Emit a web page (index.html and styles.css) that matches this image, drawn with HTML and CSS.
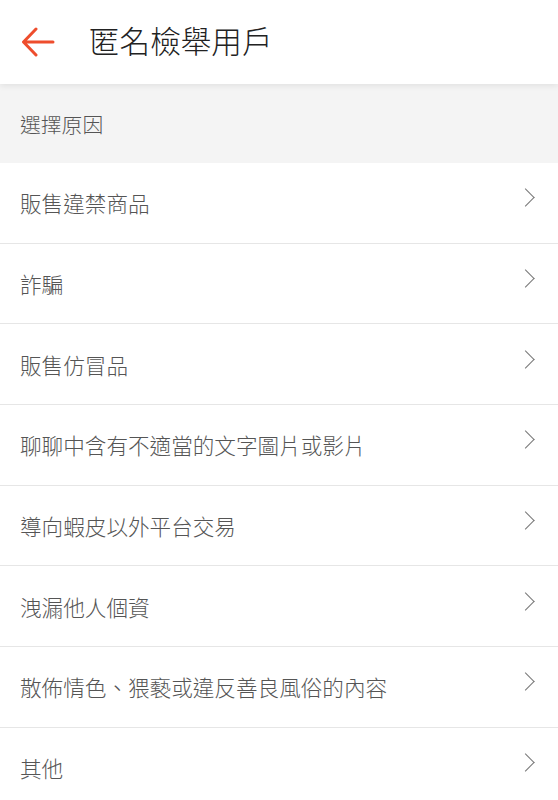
FILE: index.html
```html
<!DOCTYPE html>
<html lang="zh-TW">
<head>
    <meta charset="UTF-8">
    <meta name="viewport" content="width=device-width, initial-scale=1.0">
    <title>匿名檢舉用戶</title>
    <link rel="stylesheet" href="styles.css">
</head>
<body>
    <header class="topbar">
        <button type="button" class="back" aria-label="返回">
            <svg width="34" height="30" viewBox="0 0 34 30">
                <path d="M32 15H3M15 2L2.5 15L15 28" fill="none" stroke="#ee4d2d" stroke-width="3" stroke-linecap="round" stroke-linejoin="round"/>
            </svg>
        </button>
        <h1 class="title">匿名檢舉用戶</h1>
    </header>

    <div class="section">選擇原因</div>

    <ul class="reasons">
        <li class="reason"><span>販售違禁商品</span><i class="chev"></i></li>
        <li class="reason"><span>詐騙</span><i class="chev"></i></li>
        <li class="reason"><span>販售仿冒品</span><i class="chev"></i></li>
        <li class="reason"><span>聊聊中含有不適當的文字圖片或影片</span><i class="chev"></i></li>
        <li class="reason"><span>導向蝦皮以外平台交易</span><i class="chev"></i></li>
        <li class="reason"><span>洩漏他人個資</span><i class="chev"></i></li>
        <li class="reason"><span>散佈情色、猥褻或違反善良風俗的內容</span><i class="chev"></i></li>
        <li class="reason"><span>其他</span><i class="chev"></i></li>
    </ul>
</body>
</html>
```

FILE: styles.css
```css
body{
    margin: 0;
    font-family: "Noto Sans CJK TC", "Noto Sans", sans-serif;
    background-color: #fff;
}
.topbar{
    position: relative;
    z-index: 1;
    height: 84px;
    display: flex;
    align-items: center;
    background-color: #fff;
    box-shadow: 0 2px 6px rgba(0, 0, 0, 0.08);
}
.back{
    border: none;
    background: none;
    padding: 0;
    margin-left: 21px;
    width: 34px;
    height: 30px;
    display: flex;
    cursor: pointer;
}
.title{
    margin: 0 0 0 34px;
    font-size: 30.6px;
    font-weight: 300;
    color: #222;
    line-height: 1;
    position: relative;
    top: -2px;
}
.section{
    height: 79px;
    display: flex;
    align-items: center;
    padding-left: 20px;
    background-color: #f4f4f4;
    font-size: 20.8px;
    font-weight: 300;
    color: #555;
}
.reasons{
    list-style: none;
    margin: 0;
    padding: 0;
}
.reason{
    box-sizing: border-box;
    height: 80.67px;
    display: flex;
    align-items: center;
    justify-content: space-between;
    padding: 0 20px;
    border-bottom: 1px solid #e6e6e6;
    font-size: 21.6px;
    font-weight: 300;
    color: #555;
}
.reason:last-child{
    border-bottom: none;
}
.chev{
    width: 12px;
    height: 12px;
    border-top: 1.8px solid #777;
    border-right: 1.8px solid #777;
    transform: rotate(45deg);
    margin-right: 6px;
    margin-top: -10px;
}
```
